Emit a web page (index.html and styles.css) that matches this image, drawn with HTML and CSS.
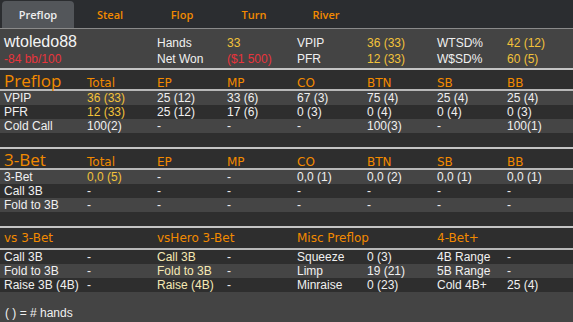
FILE: index.html
```
<!DOCTYPE html>
<html lang="en">
<head>
    <meta charset="UTF-8">
    <title>Player Stats</title>
    <link rel="stylesheet" href="styles.css">
</head>
<body>
    <div class="tabs">
        <div class="tab active">Preflop</div>
        <div class="tab">Steal</div>
        <div class="tab">Flop</div>
        <div class="tab">Turn</div>
        <div class="tab">River</div>
    </div>

    <div class="summary">
        <div class="player-name">wtoledo88</div>
        <div class="label">Hands</div>
        <div class="yellow">33</div>
        <div class="label">VPIP</div>
        <div class="yellow">36 (33)</div>
        <div class="label">WTSD%</div>
        <div class="yellow">42 (12)</div>
        <div class="winrate">-84 bb/100</div>
        <div class="label">Net Won</div>
        <div class="red">($1 500)</div>
        <div class="label">PFR</div>
        <div class="yellow">12 (33)</div>
        <div class="label">W$SD%</div>
        <div class="yellow">60 (5)</div>
    </div>

    <div class="section">
        <div class="grid section-head">
            <div class="section-title">Preflop</div>
            <div>Total</div><div>EP</div><div>MP</div><div>CO</div><div>BTN</div><div>SB</div><div>BB</div>
        </div>
        <div class="grid row light">
            <div class="label">VPIP</div>
            <div class="yellow">36 (33)</div><div>25 (12)</div><div>33 (6)</div><div>67 (3)</div><div>75 (4)</div><div>25 (4)</div><div>25 (4)</div>
        </div>
        <div class="grid row">
            <div class="label">PFR</div>
            <div class="yellow">12 (33)</div><div>25 (12)</div><div>17 (6)</div><div>0 (3)</div><div>0 (4)</div><div>0 (4)</div><div>0 (3)</div>
        </div>
        <div class="grid row light">
            <div class="label">Cold Call</div>
            <div>100(2)</div><div>-</div><div>-</div><div>-</div><div>100(3)</div><div>-</div><div>100(1)</div>
        </div>
        <div class="filler"></div>
    </div>

    <div class="section">
        <div class="grid section-head">
            <div class="section-title">3-Bet</div>
            <div>Total</div><div>EP</div><div>MP</div><div>CO</div><div>BTN</div><div>SB</div><div>BB</div>
        </div>
        <div class="grid row light">
            <div class="label">3-Bet</div>
            <div class="yellow">0,0 (5)</div><div>-</div><div>-</div><div>0,0 (1)</div><div>0,0 (2)</div><div>0,0 (1)</div><div>0,0 (1)</div>
        </div>
        <div class="grid row">
            <div class="label">Call 3B</div>
            <div>-</div><div>-</div><div>-</div><div>-</div><div>-</div><div>-</div><div>-</div>
        </div>
        <div class="grid row light">
            <div class="label">Fold to 3B</div>
            <div>-</div><div>-</div><div>-</div><div>-</div><div>-</div><div>-</div><div>-</div>
        </div>
        <div class="filler"></div>
    </div>

    <div class="section last">
        <div class="grid section-head small">
            <div class="span2">vs 3-Bet</div>
            <div class="span2">vsHero 3-Bet</div>
            <div class="span2">Misc Preflop</div>
            <div class="span2">4-Bet+</div>
        </div>
        <div class="grid row">
            <div class="label">Call 3B</div><div>-</div>
            <div class="cream">Call 3B</div><div>-</div>
            <div class="label">Squeeze</div><div>0 (3)</div>
            <div class="label">4B Range</div><div>-</div>
        </div>
        <div class="grid row light">
            <div class="label">Fold to 3B</div><div>-</div>
            <div class="cream">Fold to 3B</div><div>-</div>
            <div class="label">Limp</div><div>19 (21)</div>
            <div class="label">5B Range</div><div>-</div>
        </div>
        <div class="grid row">
            <div class="label">Raise 3B (4B)</div><div>-</div>
            <div class="cream">Raise (4B)</div><div>-</div>
            <div class="label">Minraise</div><div>0 (23)</div>
            <div class="label">Cold 4B+</div><div>25 (4)</div>
        </div>
        <div class="legend">( ) = # hands</div>
    </div>
</body>
</html>
```

FILE: styles.css
```
body {
    margin: 0;
    padding: 0;
    width: 573px;
    height: 322px;
    overflow: hidden;
    background: #444;
    color: #f0f0f0;
    font-family: 'Liberation Sans', Arial, sans-serif;
    font-size: 12px;
}

.tabs {
    display: flex;
    height: 28px;
    padding-left: 2px;
    background: #2b2d30;
    box-sizing: border-box;
    padding-top: 1px;
}
.tab {
    width: 72px;
    text-align: center;
    line-height: 27px;
    font-family: 'Open Sans', sans-serif;
    font-weight: 600;
    font-size: 11px;
    color: #f28a00;
    border-radius: 4px 4px 0 0;
}
.tab.active {
    background: #53565a;
    color: #eee;
}

.summary {
    display: grid;
    grid-template-columns: 153px repeat(6, 70px);
    grid-template-rows: 17px 16px;
    padding: 4px 0 0 4px;
    height: 40px;
    box-sizing: border-box;
    background: #444;
    border-top: 1px solid #8a8a8a;
    align-items: end;
}
.player-name {
    font-size: 16px;
    line-height: 16px;
    color: #f4f4f4;
}
.winrate {
    color: #e8343c;
    font-size: 12px;
    line-height: 14px;
}

.summary .label, .summary .yellow, .summary .red {
    font-size: 12px;
    line-height: 14px;
}

.section {
    background: #2e2e2e;
    border-top: 2px solid #c4c4c4;
}
.section.last {
    height: 93px;
    box-sizing: border-box;
}

.grid {
    display: grid;
    grid-template-columns: 83px repeat(7, 70px);
    padding-left: 4px;
}

.section-head {
    height: 19px;
    align-items: end;
    color: #f28a00;
    font-family: 'DejaVu Sans', sans-serif;
    font-size: 12px;
    line-height: 16px;
    border-bottom: 2px solid #b8b8b8;
}
.section-title {
    font-family: 'Open Sans', sans-serif;
    font-size: 17px;
    line-height: 21px;
}
.section-head.small {
    height: 20px;
    align-items: center;
}
.span2 { grid-column: span 2; }

.row {
    height: 14px;
    line-height: 14px;
    white-space: nowrap;
}
.row.light { background: #454545; }

.filler { height: 14px; }

.legend {
    background: #444;
    height: 43px;
    padding: 14px 0 0 5px;
    box-sizing: border-box;
    color: #f0f0f0;
}

.label { color: #f0f0f0; }
.yellow { color: #f2c23a; }
.red { color: #e8343c; }
.cream { color: #f5e9b4; }
```
